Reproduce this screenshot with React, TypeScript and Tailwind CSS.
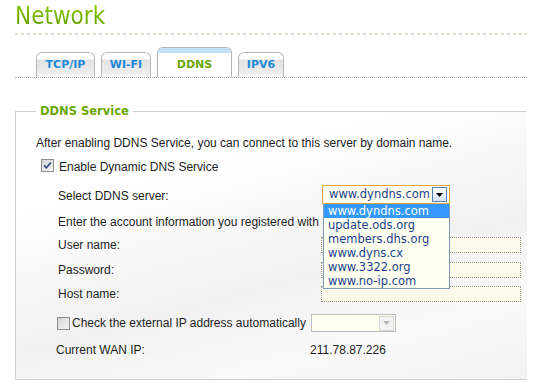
import React from "react";

function Box({ checked }: { checked: boolean }) {
  return (
    <span className="flex h-[13px] w-[13px] shrink-0 items-center justify-center border border-[#8e8e8e] bg-[linear-gradient(135deg,#d4d4d4,#f6f6f6)]">
      {checked && (
        <svg width="9" height="9" viewBox="0 0 9 9">
          <path d="M1.2 4.4 L3.4 6.8 L7.8 1.6" stroke="#3b4d8a" strokeWidth="1.7" fill="none" />
        </svg>
      )}
    </span>
  );
}

const tabs = [
  { label: "TCP/IP", w: "w-[59px]" },
  { label: "WI-FI", w: "w-[50px]" },
  { label: "DDNS", w: "w-[75px]", active: true },
  { label: "IPV6", w: "w-[46px]" },
];

const servers = [
  "www.dyndns.com",
  "update.ods.org",
  "members.dhs.org",
  "www.dyns.cx",
  "www.3322.org",
  "www.no-ip.com",
];

export default function App() {
  return (
    <div className="relative h-[389px] w-[542px] overflow-hidden bg-white font-['Liberation_Sans',Arial,sans-serif] text-[12px] text-[#1e1e1e]">
      {/* Title */}
      <div className="h-[33px] pl-[15px] font-['DejaVu_Sans_Condensed','DejaVu_Sans',sans-serif] text-[24px] leading-[33px]">
        <span className="bg-[linear-gradient(#8ccb00,#5c9c00)] bg-clip-text text-transparent">Network</span>
      </div>
      <div className="ml-[15px] h-[2px] w-[512px] bg-[repeating-linear-gradient(90deg,#dfdccd_0_3px,transparent_3px_6px)]" />

      {/* Tabs */}
      <div className="ml-[15px] flex h-[43px] w-[512px] items-end gap-[6px] border-b border-dotted border-[#a8a8a8] pl-[21px] font-['DejaVu_Sans',Verdana,sans-serif] text-[11px] font-bold">
        {tabs.map((t) =>
          t.active ? (
            <div
              key={t.label}
              className={`${t.w} flex h-[30px] flex-col overflow-hidden rounded-t-[6px] border border-b-0 border-[#b5b5b5] bg-white`}
            >
              <div className="h-[5px] shrink-0 bg-[#c2e1f7]" />
              <div className="flex flex-1 items-center justify-center text-[#6aa700]">{t.label}</div>
            </div>
          ) : (
            <div
              key={t.label}
              className={`${t.w} flex h-[25px] items-center justify-center rounded-t-[6px] border border-b-0 border-[#b8b8b8] bg-[linear-gradient(#ffffff_0,#ffffff_6px,#e3e3e3_7px,#ececec_19px,#f8f8f8_100%)] text-[#1e89d8]`}
            >
              {t.label}
            </div>
          )
        )}
      </div>

      {/* Section */}
      <div className="ml-[15px] mt-[33px] w-[512px] border-b border-l border-t border-[#cfcfcf] bg-[linear-gradient(165deg,#ffffff_25%,#f1f1f1_60%,#fafafa_80%,#f2f2f2_100%)] pb-[19px]">
        <div className="-mt-[8px] ml-[20px] w-fit bg-white px-[4px] font-['DejaVu_Sans',Verdana,sans-serif] text-[11.5px] font-bold leading-[15px] text-[#6aa700]">
          DDNS Service
        </div>

        <div className="mt-[14px] flex h-[20px] items-center pl-[20px] leading-[16px]">
          After enabling DDNS Service, you can connect to this server by domain name.
        </div>

        <div className="mt-[4px] flex h-[20px] items-center gap-[5px] pl-[25px]">
          <span className="mb-[4px]">
            <Box checked />
          </span>
          <span>Enable Dynamic DNS Service</span>
        </div>

        <div className="relative z-10 mt-[8px] flex h-[19px] items-center pl-[42px]">
          <span className="w-[264px] pt-[2px]">Select DDNS server:</span>
          <div className="relative">
            <div className="flex h-[19px] w-[128px] items-center justify-between border border-[#e4a53a] bg-[#fffff2] pl-[6px] pr-[2px] font-['DejaVu_Sans',Verdana,sans-serif] text-[11.5px] text-[#1d3f8c]">
              <span>www.dyndns.com</span>
              <span className="flex h-[15px] w-[15px] items-center justify-center border border-[#4f82b8] bg-[linear-gradient(#ffffff,#d6e4f3)]">
                <svg width="7" height="4" viewBox="0 0 7 4">
                  <path d="M0 0 H7 L3.5 4 Z" fill="#000" />
                </svg>
              </span>
            </div>
            <div className="absolute left-[1px] top-full w-[127px] border-x border-b border-[#7f9db9] bg-[#fffff2] font-['DejaVu_Sans',Verdana,sans-serif] text-[11.5px] leading-[14px] text-[#1d3f8c]">
              {servers.map((s, i) => (
                <div
                  key={s}
                  className={i === 0 ? "h-[14px] bg-[#3399ff] pl-[4px] text-white" : "h-[14px] pl-[4px]"}
                >
                  {s}
                </div>
              ))}
            </div>
          </div>
        </div>

        <div className="mt-[8px] flex h-[20px] items-center pl-[42px]">
          <span className="whitespace-nowrap">Enter the account information you registered with</span>
        </div>

        {["User name:", "Password:", "Host name:"].map((l, i) => (
          <div
            key={l}
            className={`flex h-[20px] items-center pl-[42px] ${i === 0 ? "mt-[3px]" : i === 1 ? "mt-[5px]" : "mt-[4px]"}`}
          >
            <span className="w-[263px]">{l}</span>
            <div className="h-[16px] w-[200px] border border-dotted border-[#a29d8a] bg-[#fcfbeb]" />
          </div>
        ))}

        <div className="mt-[9px] flex h-[20px] items-center pl-[41px]">
          <Box checked={false} />
          <span className="ml-[2px] w-[239px]">Check the external IP address automatically</span>
          <div className="flex h-[18px] w-[85px] items-center justify-end border border-[#bdbdbd] bg-[#fffff2] pr-[1px]">
            <span className="flex h-[15px] w-[15px] items-center justify-center border border-[#d6d6d6] bg-[#f4f4f4]">
              <svg width="7" height="4" viewBox="0 0 7 4">
                <path d="M0 0 H7 L3.5 4 Z" fill="#b5b5b5" />
              </svg>
            </span>
          </div>
        </div>

        <div className="mt-[7px] flex h-[20px] items-center pl-[40px]">
          <span className="w-[254px]">Current WAN IP:</span>
          <span>211.78.87.226</span>
        </div>
      </div>
    </div>
  );
}
